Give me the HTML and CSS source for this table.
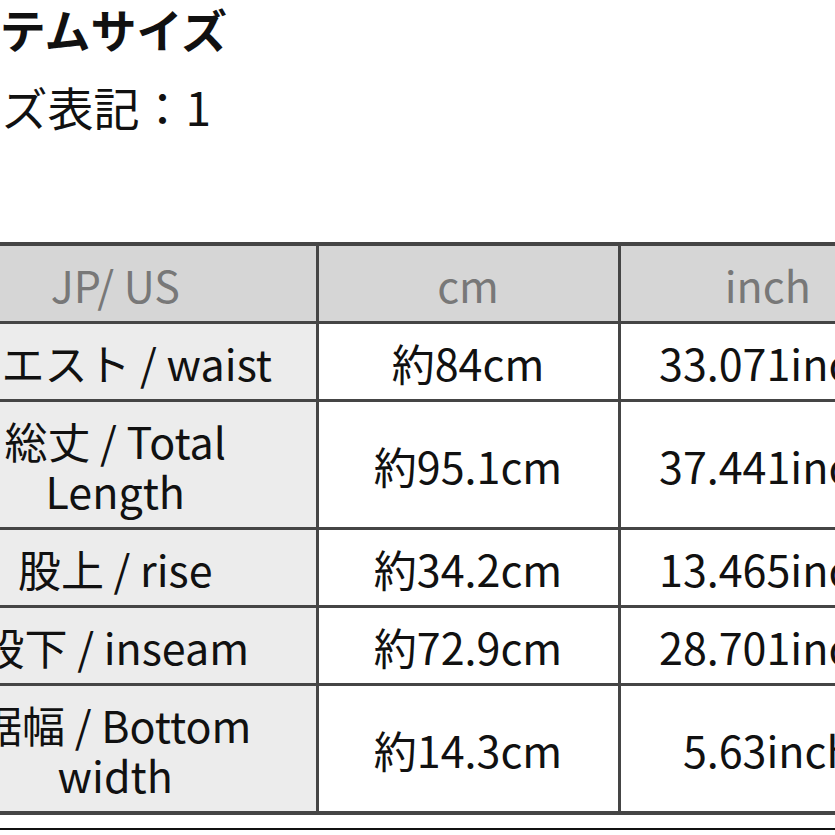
FILE: index.html
```html
<!DOCTYPE html>
<html lang="ja">
<head>
<meta charset="utf-8">
<link rel="stylesheet" href="styles.css">
</head>
<body>
<div class="page">
  <h2 class="title">アイテムサイズ</h2>
  <p class="size-label">サイズ表記：1</p>
  <table class="size-table">
    <colgroup>
      <col class="c1"><col class="c2"><col class="c3">
    </colgroup>
    <thead>
      <tr><th>JP/ US</th><th>cm</th><th>inch</th></tr>
    </thead>
    <tbody>
      <tr><td class="name">ウエスト / waist</td><td>約84cm</td><td>33.071inch</td></tr>
      <tr><td class="name">総丈 / Total Length</td><td>約95.1cm</td><td>37.441inch</td></tr>
      <tr><td class="name">股上 / rise</td><td>約34.2cm</td><td>13.465inch</td></tr>
      <tr><td class="name">股下 / inseam</td><td>約72.9cm</td><td>28.701inch</td></tr>
      <tr><td class="name">裾幅 / Bottom width</td><td>約14.3cm</td><td>5.63inch</td></tr>
    </tbody>
  </table>
  <div class="rule"></div>
</div>
</body>
</html>
```
FILE: styles.css
```css
html, body {
  margin: 0;
  padding: 0;
  overflow: hidden;
  background: #ffffff;
}
body {
  width: 835px;
  height: 835px;
  font-family: "Noto Sans CJK JP", "Noto Sans", sans-serif;
  color: #111;
}
.page {
  margin-left: -89px;
  width: 1100px;
}
.title {
  margin: 0;
  font-size: 46px;
  line-height: 56px;
  font-weight: 700;
}
.size-label {
  margin: 22px 0 0 0;
  font-size: 46px;
  line-height: 56px;
}
.size-table {
  margin-top: 108px;
  border-collapse: collapse;
  table-layout: fixed;
  width: 1004px;
  border: 4px solid #454545;
}
.c1 { width: 404px; }
.c2 { width: 302px; }
.c3 { width: 298px; }
.size-table th,
.size-table td {
  border: 3px solid #454545;
  text-align: center;
  vertical-align: middle;
  font-size: 43px;
  line-height: 50px;
  padding: 12.5px 4px;
  font-weight: 400;
}
.size-table th {
  background: #d6d6d6;
  color: #787878;
}
.size-table td {
  background: #ffffff;
  color: #111;
}
.size-table td.name {
  background: #ececec;
  padding-left: 34px;
  padding-right: 34px;
}
.rule {
  margin-top: 13px;
  height: 2px;
  background: #111;
}
```
